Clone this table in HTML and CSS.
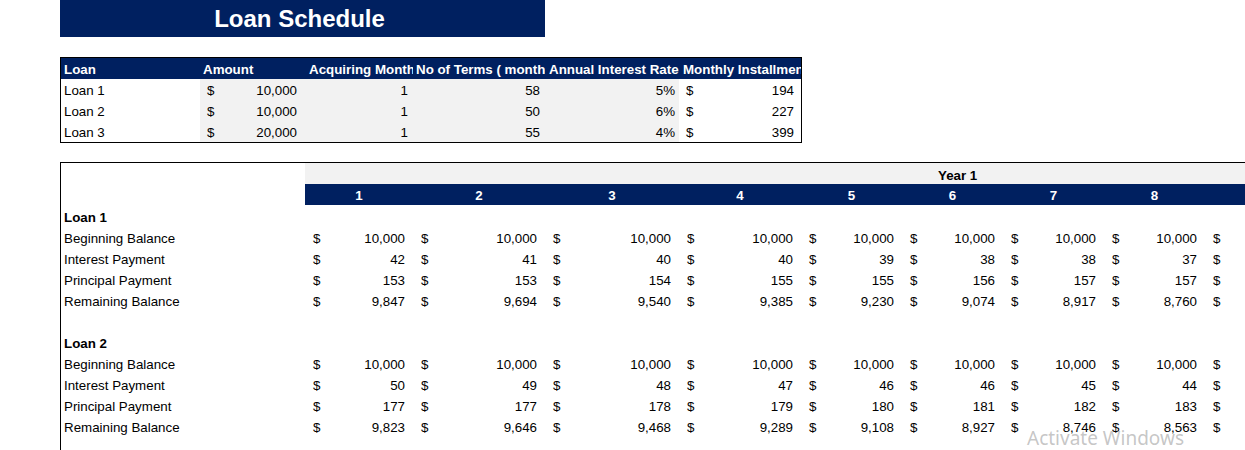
FILE: index.html
```html
<!DOCTYPE html>
<html lang="en">
<head>
<meta charset="utf-8">
<title>Loan Schedule</title>
<link rel="stylesheet" href="styles.css">
</head>
<body>
<div class="page">
  <div class="title">Loan Schedule</div>

  <div class="summary">
    <div class="th">Loan</div>
    <div class="th">Amount</div>
    <div class="th th-wide">Acquiring Month</div>
    <div class="th">No of Terms ( months )</div>
    <div class="th th-wide">Annual Interest Rate</div>
    <div class="th th-wide">Monthly Installment</div>

    <div class="td label">Loan 1</div>
    <div class="td acc shade"><span>$</span><span>10,000</span></div>
    <div class="td num shade">1</div>
    <div class="td num shade">58</div>
    <div class="td pct shade">5%</div>
    <div class="td acc acc-last"><span>$</span><span>194</span></div>

    <div class="td label">Loan 2</div>
    <div class="td acc shade"><span>$</span><span>10,000</span></div>
    <div class="td num shade">1</div>
    <div class="td num shade">50</div>
    <div class="td pct shade">6%</div>
    <div class="td acc acc-last"><span>$</span><span>227</span></div>

    <div class="td label">Loan 3</div>
    <div class="td acc shade"><span>$</span><span>20,000</span></div>
    <div class="td num shade">1</div>
    <div class="td num shade">55</div>
    <div class="td pct shade">4%</div>
    <div class="td acc acc-last"><span>$</span><span>399</span></div>
  </div>

  <div class="schedule">
    <div class="grid">
      <div class="cell"></div>
      <div class="year">Year 1</div>

      <div class="cell"></div>
      <div class="month">1</div>
      <div class="month">2</div>
      <div class="month">3</div>
      <div class="month">4</div>
      <div class="month">5</div>
      <div class="month">6</div>
      <div class="month">7</div>
      <div class="month">8</div>
      <div class="month">9</div>

      <div class="cell label bold">Loan 1</div>
      <div class="cell span"></div>

      <div class="cell label">Beginning Balance</div>
      <div class="cell acc"><span>$</span><span>10,000</span></div>
      <div class="cell acc"><span>$</span><span>10,000</span></div>
      <div class="cell acc"><span>$</span><span>10,000</span></div>
      <div class="cell acc"><span>$</span><span>10,000</span></div>
      <div class="cell acc"><span>$</span><span>10,000</span></div>
      <div class="cell acc"><span>$</span><span>10,000</span></div>
      <div class="cell acc"><span>$</span><span>10,000</span></div>
      <div class="cell acc"><span>$</span><span>10,000</span></div>
      <div class="cell acc"><span>$</span><span>10,000</span></div>

      <div class="cell label">Interest Payment</div>
      <div class="cell acc"><span>$</span><span>42</span></div>
      <div class="cell acc"><span>$</span><span>41</span></div>
      <div class="cell acc"><span>$</span><span>40</span></div>
      <div class="cell acc"><span>$</span><span>40</span></div>
      <div class="cell acc"><span>$</span><span>39</span></div>
      <div class="cell acc"><span>$</span><span>38</span></div>
      <div class="cell acc"><span>$</span><span>38</span></div>
      <div class="cell acc"><span>$</span><span>37</span></div>
      <div class="cell acc"><span>$</span><span>37</span></div>

      <div class="cell label">Principal Payment</div>
      <div class="cell acc"><span>$</span><span>153</span></div>
      <div class="cell acc"><span>$</span><span>153</span></div>
      <div class="cell acc"><span>$</span><span>154</span></div>
      <div class="cell acc"><span>$</span><span>155</span></div>
      <div class="cell acc"><span>$</span><span>155</span></div>
      <div class="cell acc"><span>$</span><span>156</span></div>
      <div class="cell acc"><span>$</span><span>157</span></div>
      <div class="cell acc"><span>$</span><span>157</span></div>
      <div class="cell acc"><span>$</span><span>158</span></div>

      <div class="cell label">Remaining Balance</div>
      <div class="cell acc"><span>$</span><span>9,847</span></div>
      <div class="cell acc"><span>$</span><span>9,694</span></div>
      <div class="cell acc"><span>$</span><span>9,540</span></div>
      <div class="cell acc"><span>$</span><span>9,385</span></div>
      <div class="cell acc"><span>$</span><span>9,230</span></div>
      <div class="cell acc"><span>$</span><span>9,074</span></div>
      <div class="cell acc"><span>$</span><span>8,917</span></div>
      <div class="cell acc"><span>$</span><span>8,760</span></div>
      <div class="cell acc"><span>$</span><span>8,602</span></div>

      <div class="cell label"></div>
      <div class="cell span"></div>

      <div class="cell label bold">Loan 2</div>
      <div class="cell span"></div>

      <div class="cell label">Beginning Balance</div>
      <div class="cell acc"><span>$</span><span>10,000</span></div>
      <div class="cell acc"><span>$</span><span>10,000</span></div>
      <div class="cell acc"><span>$</span><span>10,000</span></div>
      <div class="cell acc"><span>$</span><span>10,000</span></div>
      <div class="cell acc"><span>$</span><span>10,000</span></div>
      <div class="cell acc"><span>$</span><span>10,000</span></div>
      <div class="cell acc"><span>$</span><span>10,000</span></div>
      <div class="cell acc"><span>$</span><span>10,000</span></div>
      <div class="cell acc"><span>$</span><span>10,000</span></div>

      <div class="cell label">Interest Payment</div>
      <div class="cell acc"><span>$</span><span>50</span></div>
      <div class="cell acc"><span>$</span><span>49</span></div>
      <div class="cell acc"><span>$</span><span>48</span></div>
      <div class="cell acc"><span>$</span><span>47</span></div>
      <div class="cell acc"><span>$</span><span>46</span></div>
      <div class="cell acc"><span>$</span><span>46</span></div>
      <div class="cell acc"><span>$</span><span>45</span></div>
      <div class="cell acc"><span>$</span><span>44</span></div>
      <div class="cell acc"><span>$</span><span>43</span></div>

      <div class="cell label">Principal Payment</div>
      <div class="cell acc"><span>$</span><span>177</span></div>
      <div class="cell acc"><span>$</span><span>177</span></div>
      <div class="cell acc"><span>$</span><span>178</span></div>
      <div class="cell acc"><span>$</span><span>179</span></div>
      <div class="cell acc"><span>$</span><span>180</span></div>
      <div class="cell acc"><span>$</span><span>181</span></div>
      <div class="cell acc"><span>$</span><span>182</span></div>
      <div class="cell acc"><span>$</span><span>183</span></div>
      <div class="cell acc"><span>$</span><span>184</span></div>

      <div class="cell label">Remaining Balance</div>
      <div class="cell acc"><span>$</span><span>9,823</span></div>
      <div class="cell acc"><span>$</span><span>9,646</span></div>
      <div class="cell acc"><span>$</span><span>9,468</span></div>
      <div class="cell acc"><span>$</span><span>9,289</span></div>
      <div class="cell acc"><span>$</span><span>9,108</span></div>
      <div class="cell acc"><span>$</span><span>8,927</span></div>
      <div class="cell acc"><span>$</span><span>8,746</span></div>
      <div class="cell acc"><span>$</span><span>8,563</span></div>
      <div class="cell acc"><span>$</span><span>8,379</span></div>

      <div class="cell label"></div>
      <div class="cell span"></div>
    </div>
  </div>

  <div class="watermark">Activate Windows</div>
</div>
</body>
</html>
```

FILE: styles.css
```css
html, body {
  margin: 0;
  padding: 0;
  background: #ffffff;
}

body {
  font-family: "Liberation Sans", Arial, sans-serif;
  font-size: 13.33px;
  color: #000000;
}

.page {
  position: relative;
  height: 450px;
  overflow: hidden;
  padding-left: 60px;
}

.title {
  width: 479px;
  height: 37px;
  line-height: 37px;
  padding-right: 6px;
  background: #002060;
  color: #ffffff;
  font-weight: bold;
  font-size: 24px;
  text-align: center;
}

/* ---------- summary table ---------- */
.summary {
  margin-top: 20px;
  width: 740px;
  border: 1px solid #000000;
  display: grid;
  grid-template-columns: 139px 105px 108px 132px 134px 122px;
  grid-auto-rows: 21px;
}

.th {
  background: #002060;
  color: #ffffff;
  font-weight: bold;
  padding: 2px 0 0 3px;
  line-height: 19px;
  white-space: nowrap;
  overflow: hidden;
}

.th.th-wide {
  padding-left: 4px;
}

.td {
  padding-top: 2px;
  line-height: 19px;
  white-space: nowrap;
}

.td.label {
  padding-left: 3px;
}

.shade {
  background: #f2f2f2;
}

.td.acc {
  display: flex;
  justify-content: space-between;
  padding-left: 7px;
  padding-right: 8px;
}

.td.acc-last {
  padding-right: 7px;
}

.td.num {
  text-align: right;
  padding-right: 5px;
}

.td.pct {
  text-align: right;
  padding-right: 4px;
}

/* ---------- schedule table ---------- */
.schedule {
  margin-top: 19px;
  border-top: 1px solid #000000;
  border-left: 1px solid #000000;
  overflow: hidden;
  height: 400px;
}

.grid {
  display: grid;
  grid-template-columns: 244px 108px 132px 134px 122px 101px 101px 101px 101px 101px;
  grid-auto-rows: 21px;
  width: 1245px;
}

.cell {
  padding-top: 4px;
  line-height: 17px;
  white-space: nowrap;
}

.cell.span {
  grid-column: 2 / -1;
}

.cell.label {
  padding-left: 3px;
}

.bold {
  font-weight: bold;
}

.year {
  grid-column: 2 / -1;
  background: #f2f2f2;
  font-weight: bold;
  padding: 4px 0 0 633px;
  line-height: 17px;
}

.month {
  background: #002060;
  color: #ffffff;
  font-weight: bold;
  text-align: center;
  padding-top: 2px;
  line-height: 19px;
}

.cell.acc {
  display: flex;
  justify-content: space-between;
  padding-left: 8px;
  padding-right: 8px;
}

.watermark {
  position: absolute;
  left: 1027px;
  top: 425px;
  font-family: "Noto Sans", "Open Sans", sans-serif;
  font-size: 19px;
  color: rgba(150, 150, 150, 0.55);
  white-space: nowrap;
}
```
